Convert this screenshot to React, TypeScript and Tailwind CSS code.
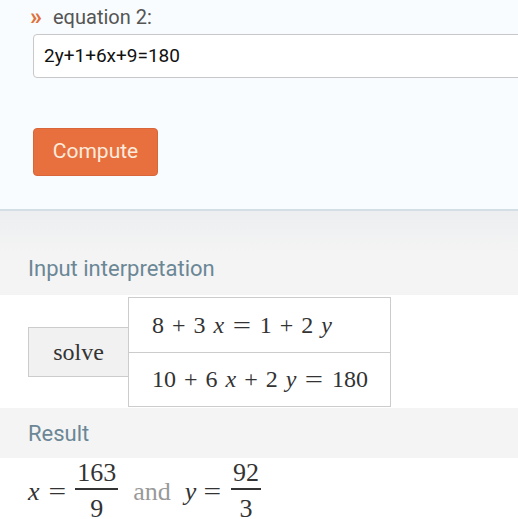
import React from 'react';

const sans = { fontFamily: 'Roboto, "Liberation Sans", Arial, sans-serif' };
const serif = { fontFamily: '"Liberation Serif", "Times New Roman", serif' };

function Frac({ num, den }: { num: string; den: string }) {
  return (
    <span className="inline-flex flex-col items-center mx-[11px]">
      <span className="leading-[30px] px-[2px]">{num}</span>
      <span className="h-[2px] w-full bg-[#333]" />
      <span className="leading-[30px] px-[2px] mt-[4px]">{den}</span>
    </span>
  );
}

function Eq({ parts }: { parts: string[] }) {
  return (
    <div className="flex items-center gap-[8px]">
      {parts.map((p, i) =>
        p === 'x' || p === 'y' ? (
          <i key={i}>{p}</i>
        ) : p === '=' ? (
          <span key={i} className="inline-block scale-x-[1.35] mx-[3px]">=</span>
        ) : (
          <span key={i}>{p}</span>
        )
      )}
    </div>
  );
}

export default function App() {
  return (
    <div className="w-[518px] h-[519px] overflow-hidden bg-[#f4f4f4]" style={sans}>
      {/* Query form */}
      <div className="h-[211px] bg-[#f8fcfe] border-b-2 border-[#d3dee5] pl-[30px] pt-[4px]">
        <div className="flex items-center h-[26px] text-[20px] text-[#555]">
          <span className="text-[#e0703c] text-[24px] mr-[11px] font-bold leading-none">»</span>
          <span>equation 2:</span>
        </div>
        <div className="ml-[3px] mt-[4px] w-[520px] h-[44px] bg-white border border-[#c8c8c8] rounded-[4px] flex items-center pl-[10px] text-[19px] text-[#111]">
          2y+1+6x+9=180
        </div>
        <button className="ml-[3px] mt-[50px] w-[125px] h-[48px] bg-[#e8703e] border border-[#d8663a] rounded-[4px] text-[21px] text-[#fdebdc]">
          Compute
        </button>
      </div>

      {/* Input interpretation */}
      <div className="h-[84px] bg-gradient-to-b from-[#eceef0] via-[#f4f4f4] to-[#f4f4f4] flex items-end pl-[28px] pb-[13px]">
        <span className="text-[22px] text-[#6b8796] leading-[26px]">Input interpretation</span>
      </div>
      <div className="h-[113px] bg-white flex items-center pl-[28px]" style={serif}>
        <div className="w-[100px] h-[50px] bg-[#f1f1f1] border border-[#ccc] border-r-0 flex items-center justify-center text-[24px] text-[#333]">
          solve
        </div>
        <div className="w-[263px] border border-[#ccc] text-[24px] text-[#333]">
          <div className="h-[55px] flex items-center pl-[23px] border-b border-[#ccc]">
            <Eq parts={['8', '+', '3', 'x', '=', '1', '+', '2', 'y']} />
          </div>
          <div className="h-[53px] flex items-center pl-[23px]">
            <Eq parts={['10', '+', '6', 'x', '+', '2', 'y', '=', '180']} />
          </div>
        </div>
      </div>

      {/* Result */}
      <div className="h-[50px] flex items-center pl-[28px] pt-[2px]">
        <span className="text-[22px] text-[#6b8796] leading-[26px]">Result</span>
      </div>
      <div className="h-[70px] bg-white flex items-start pl-[28px] text-[26px] text-[#333]" style={serif}>
        <div className="flex items-center">
          <i>x</i>
          <span className="ml-[10px] inline-block scale-x-[1.2]">=</span>
          <Frac num="163" den="9" />
          <span className="text-[#999] ml-[4px] mr-[14px]">and</span>
          <i>y</i>
          <span className="ml-[9px] inline-block scale-x-[1.2]">=</span>
          <Frac num="92" den="3" />
        </div>
      </div>
    </div>
  );
}
